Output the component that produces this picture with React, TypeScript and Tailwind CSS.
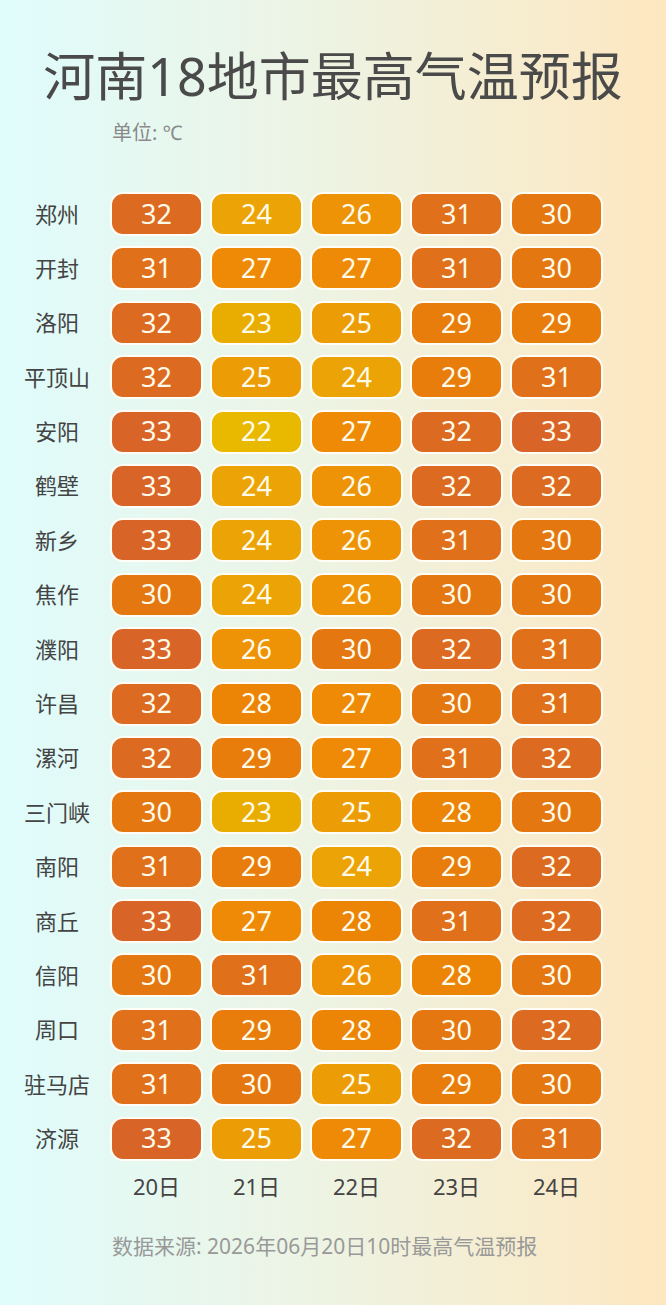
import React from "react";

const cities: [string, number[]][] = [
  ["郑州", [32, 24, 26, 31, 30]],
  ["开封", [31, 27, 27, 31, 30]],
  ["洛阳", [32, 23, 25, 29, 29]],
  ["平顶山", [32, 25, 24, 29, 31]],
  ["安阳", [33, 22, 27, 32, 33]],
  ["鹤壁", [33, 24, 26, 32, 32]],
  ["新乡", [33, 24, 26, 31, 30]],
  ["焦作", [30, 24, 26, 30, 30]],
  ["濮阳", [33, 26, 30, 32, 31]],
  ["许昌", [32, 28, 27, 30, 31]],
  ["漯河", [32, 29, 27, 31, 32]],
  ["三门峡", [30, 23, 25, 28, 30]],
  ["南阳", [31, 29, 24, 29, 32]],
  ["商丘", [33, 27, 28, 31, 32]],
  ["信阳", [30, 31, 26, 28, 30]],
  ["周口", [31, 29, 28, 30, 32]],
  ["驻马店", [31, 30, 25, 29, 30]],
  ["济源", [33, 25, 27, 32, 31]],
];

const colorClass: Record<number, string> = {
  22: "bg-[#e9b900]",
  23: "bg-[#e9ad02]",
  24: "bg-[#eba305]",
  25: "bg-[#ec9c04]",
  26: "bg-[#ed9305]",
  27: "bg-[#ee8a05]",
  28: "bg-[#ec8406]",
  29: "bg-[#e87d0c]",
  30: "bg-[#e57711]",
  31: "bg-[#e07019]",
  32: "bg-[#dc6a20]",
  33: "bg-[#d96428]",
};

const days = ["20日", "21日", "22日", "23日", "24日"];

export default function App() {
  return (
    <div
      className="w-[666px] h-[1305px] bg-gradient-to-r from-[#dffcfc] via-[#eef3e2] to-[#fde7c0] overflow-hidden"
      style={{ fontFamily: '"Noto Sans", "Noto Sans CJK SC", sans-serif' }}
    >
      <div className="pt-[44px] text-center text-[52px] leading-[64px] text-[#4a4a4a]">
        河南18地市最高气温预报
      </div>
      <div className="mt-[12px] pl-[112px] text-[20px] leading-[26px] text-[#8a8a8a]">
        单位: ℃
      </div>
      <div className="mt-[46px] flex flex-col gap-y-[10.4px]">
        {cities.map(([name, temps]) => (
          <div key={name} className="flex items-center h-[44px]">
            <div className="ml-[10px] w-[94px] text-center text-[22px] text-[#444]">{name}</div>
            <div className="ml-[6px] flex gap-x-[7px]">
              {temps.map((t, i) => (
                <div
                  key={i}
                  className={`w-[93px] h-[44px] rounded-[13px] border-2 border-[#fffdf5] flex items-center justify-center text-[27px] text-[#fffbea] ${colorClass[t]}`}
                >
                  {t}
                </div>
              ))}
            </div>
          </div>
        ))}
      </div>
      <div className="mt-[11px] ml-[110px] flex gap-x-[7px]">
        {days.map((d) => (
          <div key={d} className="w-[93px] text-center text-[22px] leading-[28px] text-[#444]">
            {d}
          </div>
        ))}
      </div>
      <div className="mt-[33px] pl-[112px] text-[21px] leading-[26px] text-[#999]">
        数据来源: 2026年06月20日10时最高气温预报
      </div>
    </div>
  );
}
